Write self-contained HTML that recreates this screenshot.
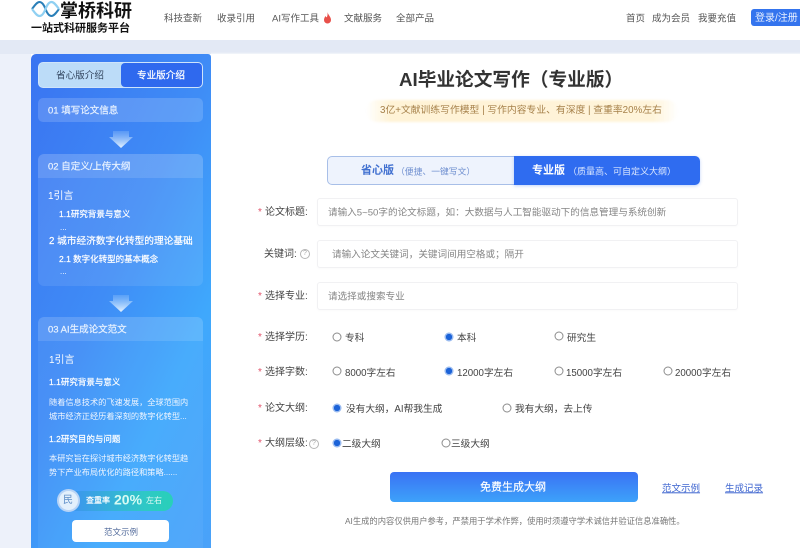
<!DOCTYPE html>
<html lang="zh"><head><meta charset="utf-8"><title>AI毕业论文写作</title>
<style>
*{box-sizing:border-box;margin:0;padding:0}
html,body{width:800px;height:548px;overflow:hidden;background:#fff}
body{position:relative;font-family:"Liberation Sans","Noto Sans CJK SC",sans-serif;color:#444}
.a{position:absolute}
.t{position:absolute;white-space:nowrap;transform:translateY(-50%);line-height:1.2;margin-top:2px}
.n{font-size:9.500px;color:#555}
.w{color:#fff}
.l{font-size:10px;color:#444}
.s{color:#e2526a;font-size:10px}
.i{position:absolute;left:317px;width:421px;height:28px;background:#fff;border:1px solid #f1f1f3;border-radius:3px;box-shadow:0 1px 2px rgba(0,0,0,.02)}
.p{font-size:9.600px;color:#858585}
.r{position:absolute;width:9px;height:9px;border-radius:50%;border:1px solid #8c8c8c;background:#fff;transform:translate(-50%,-50%)}
.c{border:1px solid #8fb4ee;background:radial-gradient(circle,#1c63d8 0 3px,#dbe8fb 3.4px)}
.o{font-size:9.700px;color:#444}
.b{font-size:9px;color:#fff;-webkit-text-stroke:.2px currentColor}
.d{font-size:8.200px;color:#f0f6ff}
</style></head><body>
<!-- header -->
<div class="a" style="left:0;top:0;width:800px;height:40px;background:#fff"></div>
<svg class="a" style="left:31px;top:0" width="29" height="18" viewBox="0 0 29 18" fill="none">
<path d="M1 9C4 5 6 2 8.500 2S13 5 14.500 9 18 16 20.500 16 25 13 28 9" stroke="#2a7fb8" stroke-width="2"/>
<path d="M1 9C4 13 6 16 8.500 16S13 13 14.500 9 18 2 20.500 2 25 5 28 9" stroke="#8fd0f2" stroke-width="2.200"/>
</svg>
<span class="t" style="left:60px;top:10px;font-size:18px;font-weight:700;color:#111">掌桥科研</span>
<span class="t" style="left:31px;top:27px;font-size:11px;font-weight:700;color:#111">一站式科研服务平台</span>
<span class="t n" style="left:164px;top:17px">科技查新</span>
<span class="t n" style="left:217px;top:17px">收录引用</span>
<span class="t n" style="left:272px;top:17px">AI写作工具</span>
<svg class="a" style="left:323px;top:12px" width="9" height="12" viewBox="0 0 9 12"><path d="M4.500 0C5 3 8 4.500 8 8a3.500 3.500 0 0 1-7 0c0-2 1-3 1.500-4 .5 1 1 1.300 1.300 1.300C4.500 4 4.800 2 4.500 0z" fill="#e8504a"/></svg>
<span class="t n" style="left:344px;top:17px">文献服务</span>
<span class="t n" style="left:396px;top:17px">全部产品</span>
<span class="t n" style="left:626px;top:17px">首页</span>
<span class="t n" style="left:652px;top:17px">成为会员</span>
<span class="t n" style="left:698px;top:17px">我要充值</span>
<div class="a" style="left:751px;top:9px;width:52px;height:17px;background:#3474ee;border-radius:3px"></div>
<span class="t" style="left:755px;top:16.500px;font-size:10px;color:#e8f0ff">登录/注册</span>
<!-- background -->
<div class="a" style="left:0;top:40px;width:800px;height:14px;background:#e3e9f5"></div>
<div class="a" style="left:0;top:54px;width:31px;height:494px;background:#edf1fa"></div>
<div class="a" style="left:211px;top:40px;width:589px;height:14px;background:linear-gradient(#e3e9f5 0 12px,#f3f7fb)"></div>
<!-- sidebar -->
<div class="a" style="left:31px;top:54px;width:180px;height:494px;border-radius:5px 3px 0 0;background:linear-gradient(115deg,#3a74f1 0%,#3f8cf6 45%,#3fa8fc 72%,#4aa2f9 100%)"></div>
<div class="a" style="left:38px;top:62px;width:165px;height:26px;border-radius:5px;background:#bcdcf8;border:1px solid #cfe4fb"></div>
<div class="a" style="left:121px;top:63px;width:81px;height:24px;border-radius:4px;background:#2f69ee"></div>
<span class="t" style="left:56px;top:74px;font-size:9.600px;color:#33465f">省心版介绍</span>
<span class="t w" style="left:137px;top:74px;font-size:9.600px;-webkit-text-stroke:.2px #fff">专业版介绍</span>
<div class="a" style="left:38px;top:98px;width:165px;height:24px;border-radius:5px;background:rgba(255,255,255,.16)"></div>
<span class="t b" style="left:48px;top:109px;font-size:9.500px;color:#e8f2ff">01 填写论文信息</span>
<svg class="a" style="left:109px;top:131px" width="24" height="18" viewBox="0 0 24 18"><defs><linearGradient id="g" x1="0" y1="0" x2="0" y2="1"><stop offset="0" stop-color="#a8d0fb" stop-opacity=".25"/><stop offset="1" stop-color="#e6f3ff"/></linearGradient></defs><path d="M4 0h16v6h4L12 17 0 6h4z" fill="url(#g)"/></svg>
<div class="a" style="left:38px;top:154px;width:165px;height:132px;border-radius:6px;background:rgba(255,255,255,.09)"></div>
<div class="a" style="left:38px;top:154px;width:165px;height:24px;border-radius:6px 6px 0 0;background:rgba(255,255,255,.12)"></div>
<span class="t b" style="left:48px;top:165px;font-size:9.500px;color:#e8f2ff">02 自定义/上传大纲</span>
<span class="t w" style="left:48px;top:195px;font-size:10px">1引言</span>
<span class="t b" style="left:59px;top:212px;font-size:8.500px">1.1研究背景与意义</span>
<span class="t w" style="left:60px;top:226px;font-size:8px">...</span>
<span class="t b" style="left:49px;top:240px;font-size:9.700px">2 城市经济数字化转型的理论基础</span>
<span class="t b" style="left:59px;top:257px;font-size:8.500px">2.1 数字化转型的基本概念</span>
<span class="t w" style="left:60px;top:270px;font-size:8px">...</span>
<svg class="a" style="left:109px;top:295px" width="24" height="18" viewBox="0 0 24 18"><path d="M4 0h16v6h4L12 17 0 6h4z" fill="url(#g)"/></svg>
<div class="a" style="left:38px;top:317px;width:165px;height:231px;border-radius:6px 6px 0 0;background:rgba(255,255,255,.05)"></div>
<div class="a" style="left:38px;top:317px;width:165px;height:24px;border-radius:6px 6px 0 0;background:rgba(255,255,255,.12)"></div>
<span class="t b" style="left:48px;top:328px;font-size:9.500px;color:#e8f2ff">03 AI生成论文范文</span>
<span class="t w" style="left:49px;top:359px;font-size:10px">1引言</span>
<span class="t b" style="left:49px;top:380px;font-size:8.500px">1.1研究背景与意义</span>
<span class="t d" style="left:49px;top:401px">随着信息技术的飞速发展，全球范围内</span>
<span class="t d" style="left:49px;top:415px">城市经济正经历着深刻的数字化转型...</span>
<span class="t b" style="left:49px;top:437px;font-size:8.500px">1.2研究目的与问题</span>
<span class="t d" style="left:49px;top:457px">本研究旨在探讨城市经济数字化转型趋</span>
<span class="t d" style="left:49px;top:471px">势下产业布局优化的路径和策略......</span>
<div class="a" style="left:60px;top:491px;width:113px;height:20px;border-radius:10px;background:linear-gradient(90deg,#3f8df5,#2fc8c6 75%,#28d0b8)"></div>
<div class="a" style="left:57px;top:489px;width:23px;height:23px;border-radius:50%;background:#e3f0fc;border:2px solid #b8d4f6"></div>
<span class="t" style="left:63px;top:499px;font-size:10px;color:#5f8fc8">民</span>
<span class="t b" style="left:86px;top:499px;font-size:8px">查重率</span>
<span class="t" style="left:114px;top:498px;font-size:14px;font-weight:700;color:#d6fbf3">20%</span>
<span class="t" style="left:146px;top:499px;font-size:8px;color:#e4fbf5">左右</span>
<div class="a" style="left:72px;top:520px;width:97px;height:22px;background:#fff;border-radius:4px"></div>
<span class="t" style="left:104px;top:530px;font-size:8.500px;color:#50699a">范文示例</span>
<!-- main -->
<span class="t" style="left:399px;top:78px;font-size:18.700px;font-weight:700;color:#333">AI毕业论文写作（专业版）</span>
<div class="a" style="left:366px;top:100px;width:312px;height:22px;border-radius:11px;background:linear-gradient(90deg,rgba(255,244,214,0),#fff3d6 8%,#fff4da 92%,rgba(255,244,214,0));filter:blur(1px)"></div>
<span class="t" style="left:380px;top:109px;font-size:9.800px;color:#a6814a">3亿+文献训练写作模型 | 写作内容专业、有深度 | 查重率20%左右</span>
<div class="a" style="left:327px;top:156px;width:188px;height:29px;border:1px solid #a8bfe8;border-radius:5px 0 0 5px;background:#eef3fd"></div>
<div class="a" style="left:514px;top:156px;width:186px;height:29px;border-radius:0 5px 5px 0;background:#2f6cf0;box-shadow:0 1px 3px rgba(47,108,240,.3)"></div>
<span class="t" style="left:361px;top:169px;font-size:11px;font-weight:700;color:#3f6fd0">省心版</span>
<span class="t" style="left:396px;top:170px;font-size:8.800px;color:#6f8fd0">（便捷、一键写文）</span>
<span class="t" style="left:532px;top:169px;font-size:11px;font-weight:700;color:#fff">专业版</span>
<span class="t" style="left:568px;top:170px;font-size:9px;color:#dce8ff">（质量高、可自定义大纲）</span>

<span class="t s" style="left:258px;top:211px">*</span><span class="t l" style="left:265px;top:211px">论文标题:</span>
<div class="i" style="top:198px"></div><span class="t p" style="left:328px;top:211px">请输入5~50字的论文标题，如：大数据与人工智能驱动下的信息管理与系统创新</span>
<span class="t l" style="left:264px;top:253px">关键词:</span>
<div class="a" style="left:300px;top:249px;width:10px;height:10px;border:1px solid #b5b5b5;border-radius:50%;font-size:7px;line-height:8px;text-align:center;color:#aaa">?</div>
<div class="i" style="top:240px"></div><span class="t p" style="left:332px;top:253px">请输入论文关键词，关键词间用空格或；隔开</span>
<span class="t s" style="left:258px;top:295px">*</span><span class="t l" style="left:265px;top:295px">选择专业:</span>
<div class="i" style="top:282px"></div><span class="t p" style="left:328px;top:295px">请选择或搜索专业</span>

<span class="t s" style="left:258px;top:336px">*</span><span class="t l" style="left:265px;top:336px">选择学历:</span>
<i class="r" style="left:337px;top:337px"></i><span class="t o" style="left:345px;top:336.500px">专科</span>
<i class="r c" style="left:449px;top:337px"></i><span class="t o" style="left:457px;top:336.500px">本科</span>
<i class="r" style="left:559px;top:336px"></i><span class="t o" style="left:567px;top:336.500px">研究生</span>

<span class="t s" style="left:258px;top:371px">*</span><span class="t l" style="left:265px;top:371px">选择字数:</span>
<i class="r" style="left:337px;top:371px"></i><span class="t o" style="left:345px;top:371.500px">8000字左右</span>
<i class="r c" style="left:449px;top:371px"></i><span class="t o" style="left:457px;top:371.500px">12000字左右</span>
<i class="r" style="left:559px;top:371px"></i><span class="t o" style="left:566px;top:371.500px">15000字左右</span>
<i class="r" style="left:668px;top:371px"></i><span class="t o" style="left:675px;top:371.500px">20000字左右</span>

<span class="t s" style="left:258px;top:407px">*</span><span class="t l" style="left:265px;top:407px">论文大纲:</span>
<i class="r c" style="left:337px;top:408px"></i><span class="t o" style="left:346px;top:407.500px">没有大纲，AI帮我生成</span>
<i class="r" style="left:507px;top:408px"></i><span class="t o" style="left:515px;top:407.500px">我有大纲，去上传</span>

<span class="t s" style="left:258px;top:442px">*</span><span class="t l" style="left:265px;top:442px">大纲层级:</span>
<div class="a" style="left:309px;top:439px;width:10px;height:10px;border:1px solid #b5b5b5;border-radius:50%;font-size:7px;line-height:8px;text-align:center;color:#aaa">?</div>
<i class="r c" style="left:337px;top:443px"></i><span class="t o" style="left:342px;top:443px">二级大纲</span>
<i class="r" style="left:446px;top:443px"></i><span class="t o" style="left:451px;top:443px">三级大纲</span>

<div class="a" style="left:390px;top:472px;width:248px;height:30px;border-radius:4px;background:linear-gradient(#3a72f4,#3da2fa)"></div>
<span class="t" style="left:480px;top:486px;font-size:11px;color:#fff;-webkit-text-stroke:.15px #fff">免费生成大纲</span>
<span class="t" style="left:662px;top:487px;font-size:9.500px;color:#3f66d0;text-decoration:underline">范文示例</span>
<span class="t" style="left:725px;top:487px;font-size:9.500px;color:#3f66d0;text-decoration:underline">生成记录</span>
<span class="t" style="left:345px;top:520px;font-size:8.300px;color:#777">AI生成的内容仅供用户参考，严禁用于学术作弊，使用时须遵守学术诚信并验证信息准确性。</span>
</body></html>
